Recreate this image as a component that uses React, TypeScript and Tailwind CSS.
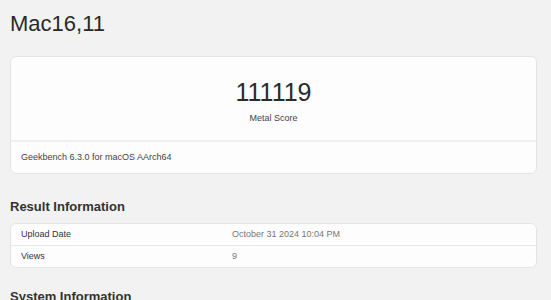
export default function App() {
  const rows = [
    { label: "Upload Date", value: "October 31 2024 10:04 PM" },
    { label: "Views", value: "9" },
  ];

  return (
    <div
      className="min-h-screen bg-[#f2f2f2] pl-[10px] pr-[14px] pt-[11px] text-[#333]"
      style={{ fontFamily: '"Liberation Sans", Arial, sans-serif' }}
    >
      <h1 className="text-[22px] leading-[26px] font-normal text-[#2a2a2a] mb-[19px]">Mac16,11</h1>

      {/* Score card */}
      <div className="bg-[#fdfdfd] border border-[#e4e4e4] rounded-[6px]">
        <div className="pt-[21px] pb-[16px] text-center">
          <div className="text-[25px] leading-[28px] text-[#2a2a2a]">111119</div>
          <div className="mt-[6px] text-[9px] leading-[12px] text-[#444]">Metal Score</div>
        </div>
        <div className="border-t-2 border-[#efefef] h-[33px] flex items-center px-[10px] text-[9px] text-[#444]">
          Geekbench 6.3.0 for macOS AArch64
        </div>
      </div>

      <h2 className="mt-[25px] mb-[8px] text-[13px] leading-[16px] font-bold text-[#333]">Result Information</h2>
      <div className="bg-[#fdfdfd] border border-[#e4e4e4] rounded-[6px]">
        {rows.map((r, i) => (
          <div
            key={r.label}
            className={`flex items-center h-[21px] text-[9px] ${i > 0 ? "border-t border-[#e8e8e8] h-[22px]" : ""}`}
          >
            <div className="w-[221px] pl-[10px] text-[#333]">{r.label}</div>
            <div className="text-[#777]">{r.value}</div>
          </div>
        ))}
      </div>

      <h2 className="mt-[21px] text-[13px] leading-[16px] font-bold text-[#333]">System Information</h2>
    </div>
  );
}
